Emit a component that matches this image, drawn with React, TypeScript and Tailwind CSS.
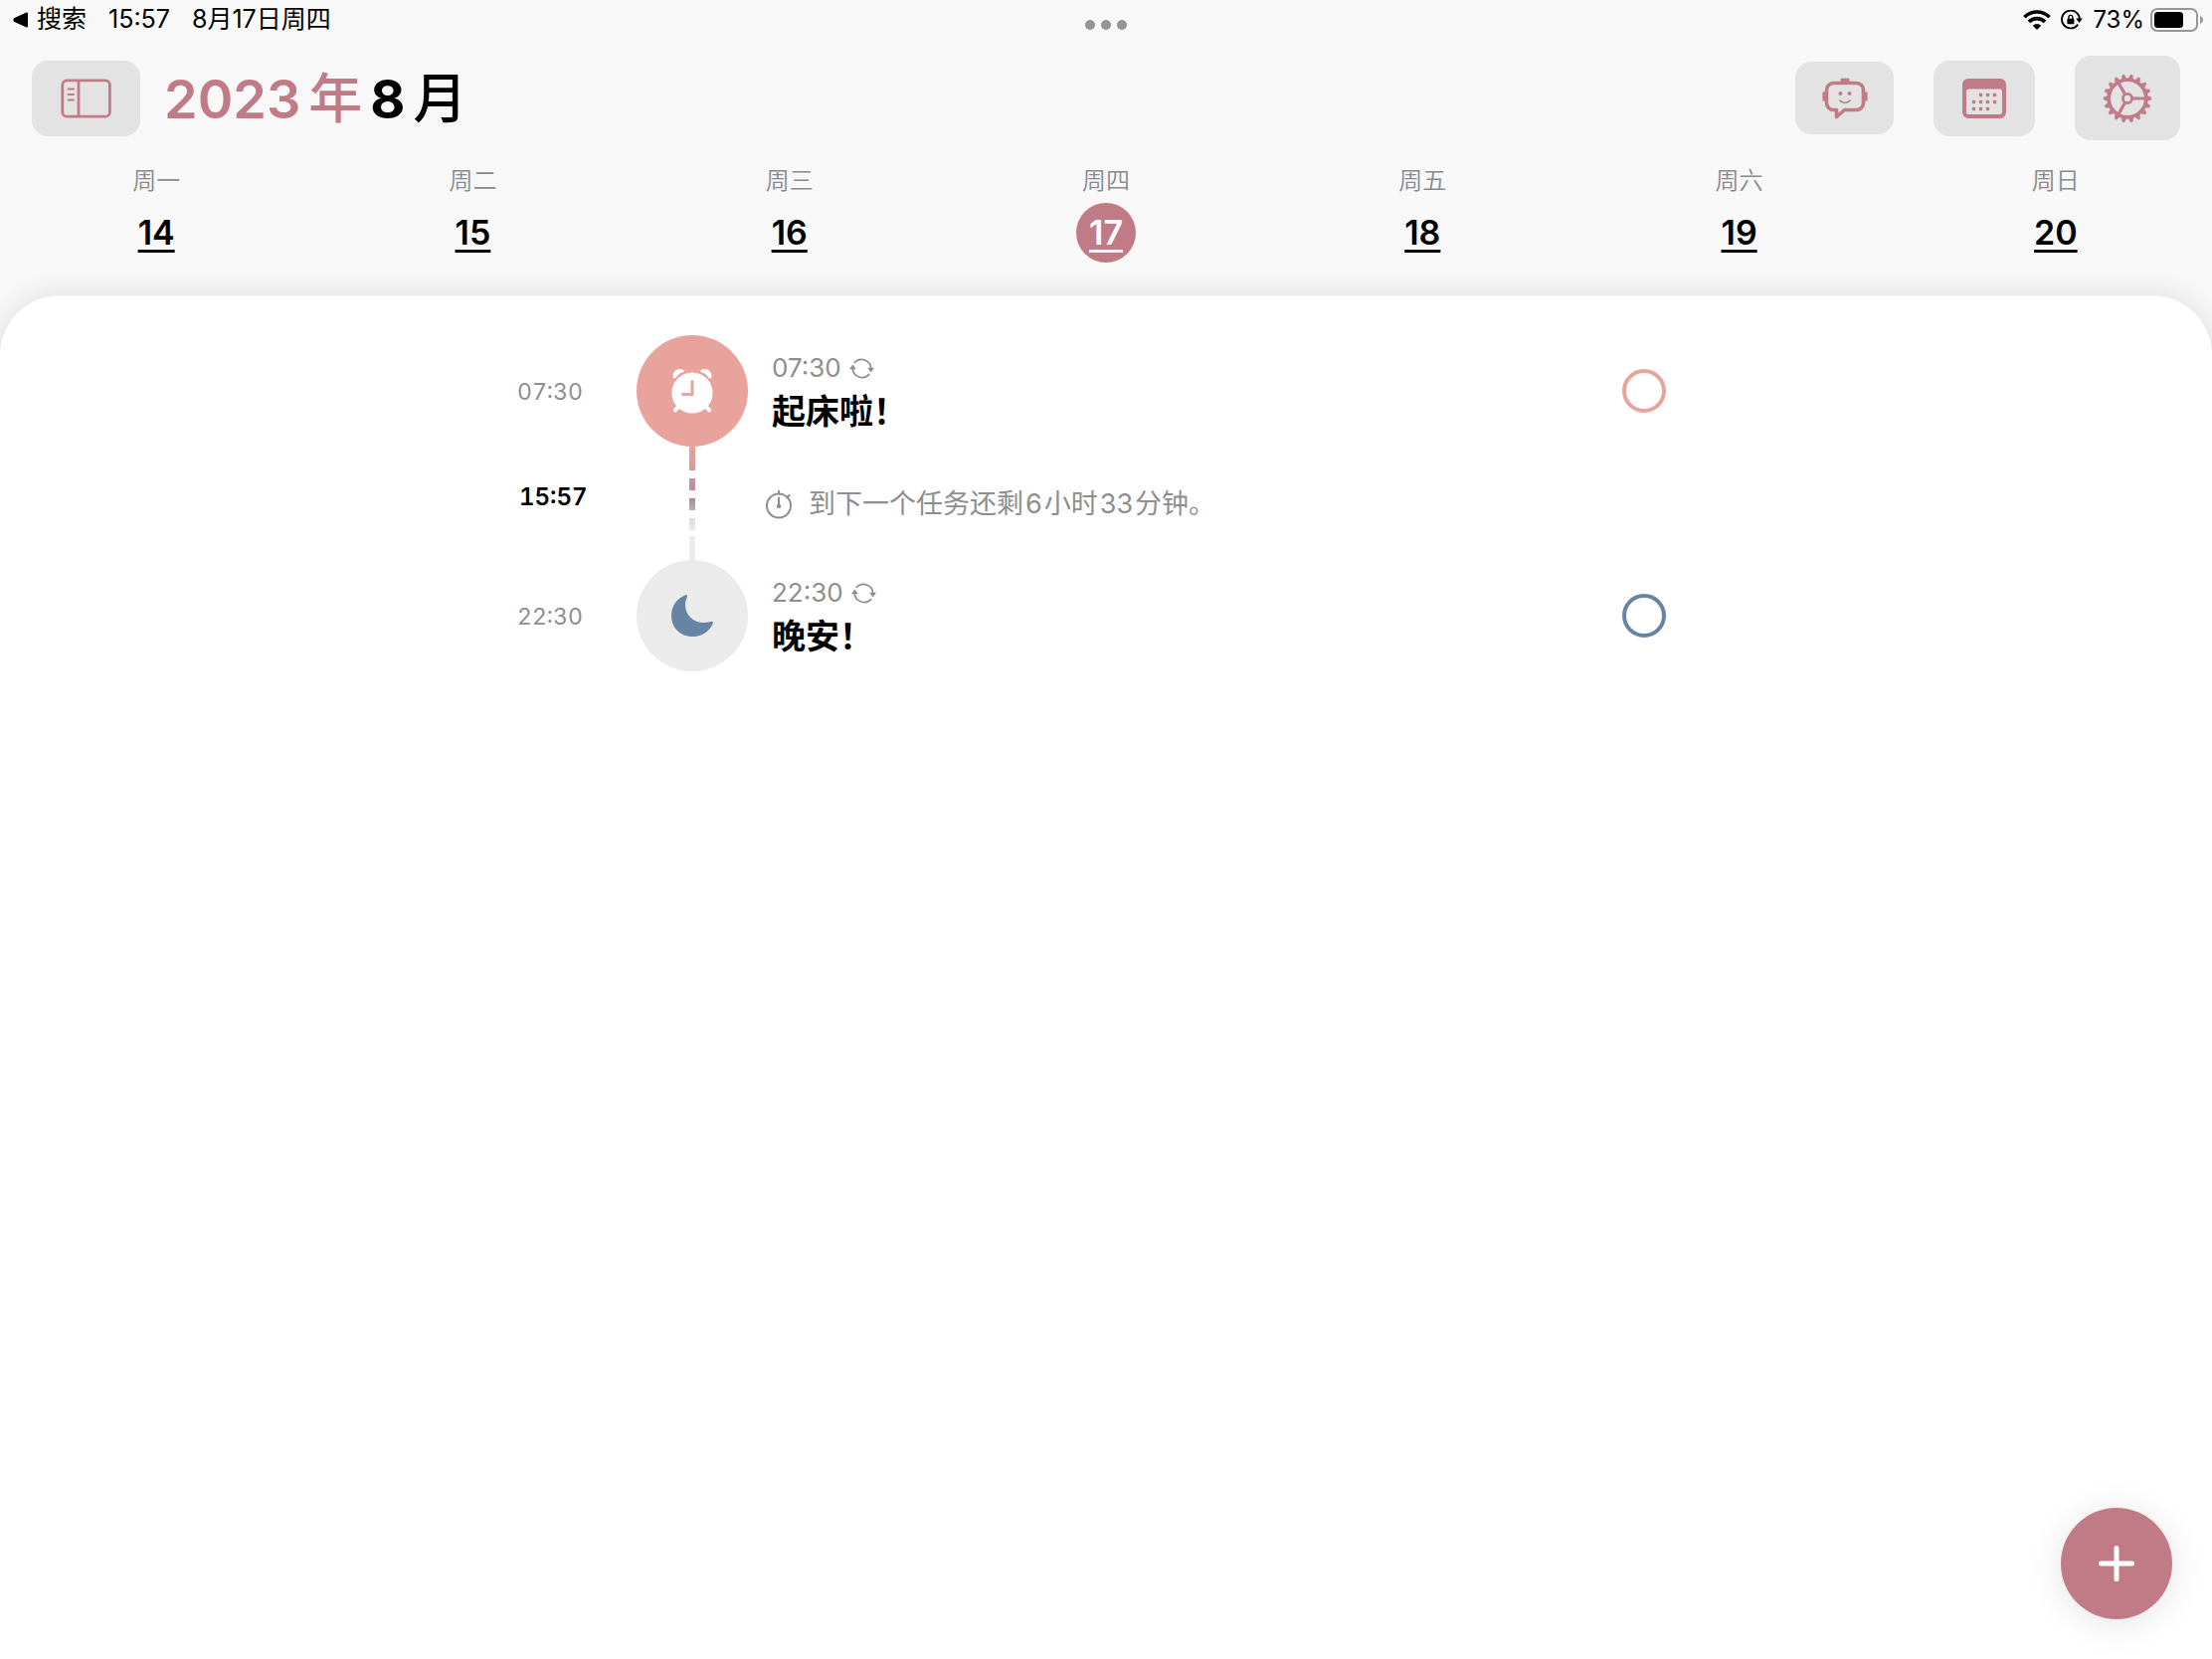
interface DayItem {
  label: string;
  date: number;
}

interface TaskRowProps {
  time: string;
  title: string;
  circleClass: string;
  checkClass: string;
  icon: React.ReactNode;
}

const days: DayItem[] = [
  { label: "周一", date: 14 },
  { label: "周二", date: 15 },
  { label: "周三", date: 16 },
  { label: "周四", date: 17 },
  { label: "周五", date: 18 },
  { label: "周六", date: 19 },
  { label: "周日", date: 20 },
];

const selectedDate = 17;

function WifiIcon() {
  return (
    <svg width="28" height="20" viewBox="0 0 28 20" fill="none" stroke="currentColor" strokeWidth="3.6" aria-hidden="true">
      <path d="M1.4 7.2a18 18 0 0 1 25.2 0" />
      <path d="M5.9 11.9a11.6 11.6 0 0 1 16.2 0" />
      <path d="M14 20l-4.2-4.2a6 6 0 0 1 8.4 0z" fill="currentColor" stroke="none" />
    </svg>
  );
}

function RotationLockIcon() {
  return (
    <svg width="22" height="20" viewBox="0 0 22 20" fill="none" aria-hidden="true">
      <path d="M17.2 14.6A8.9 8.9 0 1 1 18.8 9" stroke="currentColor" strokeWidth="1.9" />
      <path d="M15.2 8.4h6.6l-3.3 4.6z" fill="currentColor" />
      <rect x="6.4" y="8.8" width="7" height="5.4" rx="1" fill="currentColor" />
      <path d="M7.9 9V7.4a2 2 0 0 1 4 0V9" stroke="currentColor" strokeWidth="1.4" />
    </svg>
  );
}

function BatteryIcon() {
  return (
    <svg width="54" height="24" viewBox="0 0 54 24" aria-hidden="true">
      <rect x="1" y="1" width="46" height="22" rx="6" fill="none" stroke="#989898" strokeWidth="2" />
      <rect x="4" y="4" width="29" height="16" rx="3.5" fill="#000" />
      <path d="M50 8c2 .8 3 2.2 3 4s-1 3.2-3 4z" fill="#989898" />
    </svg>
  );
}

function SidebarIcon() {
  return (
    <svg width="52" height="40" viewBox="0 0 52 40" fill="none" stroke="currentColor" strokeWidth="2.8" aria-hidden="true">
      <rect x="1.8" y="1.8" width="47.6" height="36.4" rx="4.5" />
      <path d="M18 1.8v36.4" />
      <path d="M7.6 10.5h5.4M7.6 16h5.4M7.6 21.5h5.4" strokeWidth="2.2" strokeLinecap="round" />
    </svg>
  );
}

function ChatBotIcon() {
  return (
    <svg width="46" height="42" viewBox="0 0 46 42" fill="none" aria-hidden="true">
      <path
        d="M11.5 5.5h23a7 7 0 0 1 7 7v13a7 7 0 0 1-7 7H22.5l-8 7v-7h-3a7 7 0 0 1-7-7v-13a7 7 0 0 1 7-7z"
        stroke="currentColor"
        strokeWidth="3.6"
        strokeLinejoin="round"
      />
      <path d="M18.6.8h8.8v4h-8.8zM.4 14.5h4v9h-4zM41.6 14.5h4v9h-4z" fill="currentColor" />
      <circle cx="18.5" cy="16" r="2" fill="currentColor" />
      <circle cx="27.5" cy="16" r="2" fill="currentColor" />
      <path d="M18 23.2c3 2.8 7 2.8 10 0" stroke="currentColor" strokeWidth="1.7" strokeLinecap="round" />
    </svg>
  );
}

function CalendarIcon() {
  const dots = [
    [18.5, 16.5], [25.5, 16.5], [32.5, 16.5],
    [11.5, 23.5], [18.5, 23.5], [25.5, 23.5], [32.5, 23.5],
    [11.5, 30.5], [18.5, 30.5], [25.5, 30.5],
  ];
  return (
    <svg width="44" height="40" viewBox="0 0 44 40" aria-hidden="true">
      <path
        d="M6 0h32a6 6 0 0 1 6 6v28a6 6 0 0 1-6 6H6a6 6 0 0 1-6-6V6a6 6 0 0 1 6-6zM6.5 10.5A2.5 2.5 0 0 0 4 13v20.5A2.5 2.5 0 0 0 6.5 36h31a2.5 2.5 0 0 0 2.5-2.5V13a2.5 2.5 0 0 0-2.5-2.5z"
        fill="currentColor"
        fillRule="evenodd"
      />
      {dots.map(([x, y]) => (
        <rect key={`${x}-${y}`} x={x - 1.7} y={y - 1.7} width="3.4" height="3.4" rx="0.9" fill="currentColor" />
      ))}
    </svg>
  );
}

function GearIcon() {
  const teeth = Array.from({ length: 18 }, (_, i) => i * 20);
  return (
    <svg width="50" height="50" viewBox="-25 -25 50 50" fill="none" stroke="currentColor" aria-hidden="true">
      <circle r="18.8" strokeWidth="3.6" />
      <circle r="4.6" strokeWidth="2.8" />
      <path d="M5 0h14M-2.5-4.3l-7-12.2M-2.5 4.3l-7 12.2" strokeWidth="3.2" />
      {teeth.map((angle) => (
        <path key={angle} d="M20-2.4l3.6 1.2q1 1.2 0 2.4L20 2.4z" transform={`rotate(${angle})`} fill="currentColor" strokeWidth="0.5" />
      ))}
    </svg>
  );
}

function AlarmIcon() {
  return (
    <svg width="44" height="48" viewBox="0 0 44 48" fill="none" aria-hidden="true">
      <circle cx="22" cy="26" r="20.6" fill="#fff" />
      <path d="M8.3 39.6l-3.4 3.8M35.7 39.6l3.4 3.8" stroke="#fff" strokeWidth="4" strokeLinecap="round" />
      <path d="M13.5 3.4C9.5.2 2.6 3 2.5 9.3c0 1.7 1 2.8 2.5 2C7 8.2 9.6 6 13.1 5c.9-.4.9-1.1.4-1.6z" fill="#fff" />
      <path d="M30.5 3.4c4-3.2 10.9-.4 11 5.9 0 1.7-1 2.8-2.5 2-2-3.1-4.6-5.3-8.1-6.3-.9-.4-.9-1.1-.4-1.6z" fill="#fff" />
      <path d="M22 14.5v13H12.5" stroke="#e7a39c" strokeWidth="3" strokeLinecap="round" strokeLinejoin="round" />
    </svg>
  );
}

function MoonIcon() {
  return (
    <svg width="44" height="44" viewBox="0 0 44 44" aria-hidden="true">
      <path
        d="M15.3 1.2C6.5 4.6 1 12.5 1 22c0 12 9 21 21 21 9 0 16.8-4.8 20.6-12.6.8-1.8-.2-3-2-2.4-3 .8-5.6 1.1-8.1 1C22.5 28.5 15 21 15 11c0-2.7.4-5 1.7-7.3.8-1.7.2-2.9-1.4-2.5z"
        fill="#6884a5"
      />
    </svg>
  );
}

function RepeatIcon() {
  return (
    <svg width="25" height="23" viewBox="0 0 26 24" fill="none" aria-hidden="true">
      <path d="M5 6.2a10 10 0 0 1 17.7 6M21 17.8A10 10 0 0 1 3.3 11.8" stroke="currentColor" strokeWidth="1.8" />
      <path d="M19.5 11.5h6l-3 4.4zM.5 12.5h6l-3-4.4z" fill="currentColor" stroke="currentColor" strokeWidth="0.6" />
    </svg>
  );
}

function StopwatchIcon() {
  return (
    <svg width="28" height="30" viewBox="0 0 28 30" fill="none" stroke="currentColor" strokeWidth="2" aria-hidden="true">
      <circle cx="14" cy="16.5" r="12" />
      <path d="M14 4.5V1.8M22.6 8l2-2M14 8.5v8" strokeLinecap="round" />
      <circle cx="14" cy="17" r="1.2" fill="currentColor" />
    </svg>
  );
}

function TaskRow({ time, title, circleClass, checkClass, icon }: TaskRowProps) {
  return (
    <li className="flex items-center">
      <time className="w-30 pt-0.5 text-[23px] text-[#8e8e8e] tabular-nums">{time}</time>
      <span className={`flex size-28 shrink-0 items-center justify-center rounded-full ${circleClass}`}>{icon}</span>
      <div className="ml-6 flex-1 pt-0.5">
        <p className="flex items-center gap-2 text-[26px] leading-10 text-[#8e8e8e]">
          {time}
          <RepeatIcon />
        </p>
        <h2 className="text-[34px] leading-12 font-bold">{title}</h2>
      </div>
      <input
        type="checkbox"
        aria-label={title}
        className={`size-11 appearance-none rounded-full border-4 checked:bg-current ${checkClass}`}
      />
    </li>
  );
}

export default function App() {
  return (
    <div className="flex min-h-screen flex-col overflow-hidden bg-[#f8f8f8] font-['Inter','Noto_Sans_CJK_SC',sans-serif] text-black">
      <div className="grid h-10 grid-cols-[1fr_auto_1fr] items-center px-2 text-2xl">
        <div className="flex items-center gap-[22px] pl-1 text-[25px]">
          <button className="flex items-center gap-2">
            <svg width="17" height="16" viewBox="0 0 17 16" aria-hidden="true">
              <path d="M2.5 7.2L15 1.5v13L2.5 8.8z" fill="#000" stroke="#000" strokeWidth="2" strokeLinejoin="round" />
            </svg>
            搜索
          </button>
          <span>15:57</span>
          <span>8月17日周四</span>
        </div>
        <button className="flex gap-1.5 pt-2.5" aria-label="多任务">
          <span className="size-2.5 rounded-full bg-[#949494]" />
          <span className="size-2.5 rounded-full bg-[#949494]" />
          <span className="size-2.5 rounded-full bg-[#949494]" />
        </button>
        <div className="flex items-center justify-end gap-2.5">
          <WifiIcon />
          <RotationLockIcon />
          <span className="flex items-center gap-1.5">
            73%
            <BatteryIcon />
          </span>
        </div>
      </div>

      <header className="flex h-[117px] items-center px-8 text-[#c17b86]">
        <button className="flex h-19 w-[109px] items-center justify-center rounded-2xl bg-[#e3e3e3]" aria-label="侧边栏">
          <SidebarIcon />
        </button>
        <h1 className="ml-6 flex gap-2 pt-0.5 text-[54px] leading-none font-semibold">
          <span>2023</span>
          <span className="font-medium">年</span>
          <span className="font-bold text-black">8</span>
          <span className="font-medium text-black">月</span>
        </h1>
        <div className="ml-auto flex items-center gap-10">
          <button className="flex h-[73px] w-[99px] items-center justify-center rounded-2xl bg-[#e3e3e3]" aria-label="助手">
            <ChatBotIcon />
          </button>
          <button className="flex h-19 w-[102px] items-center justify-center rounded-2xl bg-[#e3e3e3]" aria-label="日历">
            <CalendarIcon />
          </button>
          <button className="flex h-[85px] w-[106px] items-center justify-center rounded-2xl bg-[#e3e3e3]" aria-label="设置">
            <GearIcon />
          </button>
        </div>
      </header>

      <nav className="-mx-0.5 grid grid-cols-7 pt-[7px] pb-[33px]">
        {days.map((day) => (
          <button key={day.date} className="flex flex-col items-center gap-1">
            <span className="text-2xl leading-9 font-[350] text-[#8a8a8e]">{day.label}</span>
            <span
              className={`flex size-15 items-center justify-center rounded-full pb-0.5 text-[34px] font-semibold underline decoration-3 underline-offset-5 ${
                day.date === selectedDate ? "bg-[#c17b86] text-white" : ""
              }`}
            >
              {day.date}
            </span>
          </button>
        ))}
      </nav>

      <main className="flex-1 rounded-t-[60px] bg-white pt-10 shadow-[0_0_30px_rgba(0,0,0,0.11)]">
        <ol className="mx-auto max-w-[1184px] pr-[29px]">
          <TaskRow
            time="07:30"
            title="起床啦！"
            circleClass="bg-[#e7a39c]"
            checkClass="border-[#e7a39c]"
            icon={<AlarmIcon />}
          />
          <li className="flex items-center text-[#8e8e8e]">
            <time className="w-30 pb-3 pl-0.5 text-2xl font-semibold text-black tabular-nums">15:57</time>
            <div className="flex w-28 flex-col items-center gap-2" aria-hidden="true">
              <span className="h-6 w-1.5 bg-linear-to-b from-[#e7a39c] to-[#cf9a9b]" />
              <span className="h-3 w-1.5 bg-linear-to-b from-[#c2969b] to-[#b5919a]" />
              <span className="h-3 w-1.5 bg-linear-to-b from-[#a98b98] to-[#b8b0bd]" />
              <span className="h-3 w-1.5 bg-linear-to-b from-[#dcdcdc] to-[#ebebeb]" />
              <span className="-mt-0.5 h-6 w-1.5 bg-[#ebebeb]" />
            </div>
            <p className="ml-[17px] flex items-center gap-4 pt-0.5 text-[27px]">
              <StopwatchIcon />
              <span>
                到下一个任务还剩<span className="mx-0.5">6</span>小时<span className="mx-0.5">33</span>分钟。
              </span>
            </p>
          </li>
          <TaskRow
            time="22:30"
            title="晚安！"
            circleClass="bg-[#ebebeb]"
            checkClass="border-[#6884a5]"
            icon={<MoonIcon />}
          />
        </ol>
      </main>

      <button
        className="fixed right-10 bottom-10 flex size-28 items-center justify-center rounded-full bg-[#c17b86] shadow-[0_4px_36px_rgba(0,0,0,0.11)]"
        aria-label="添加任务"
      >
        <svg width="36" height="36" viewBox="0 0 36 36" stroke="#fff" strokeWidth="5" strokeLinecap="round" aria-hidden="true">
          <path d="M18 2.5v31M2.5 18h31" />
        </svg>
      </button>
    </div>
  );
}
